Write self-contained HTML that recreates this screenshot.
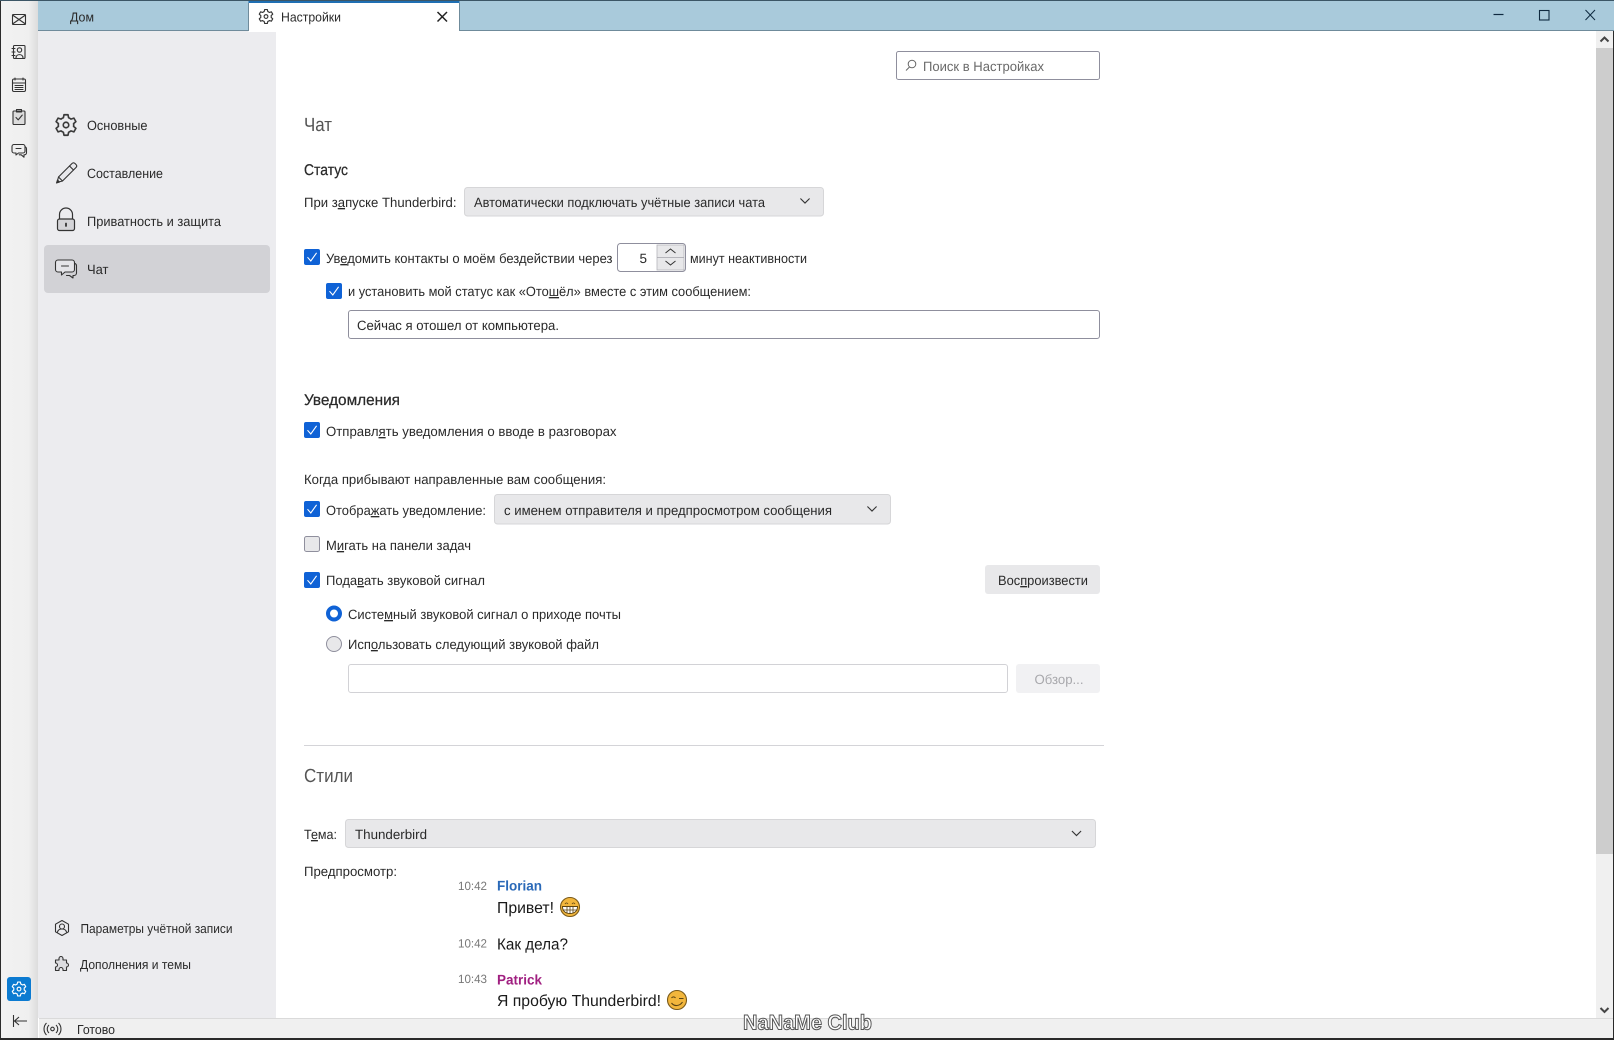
<!DOCTYPE html>
<html><head><meta charset="utf-8"><style>
html,body{margin:0;padding:0;background:#fff;width:1614px;height:1040px;overflow:hidden}
svg{display:block}
text{font-family:"Liberation Sans","Noto Sans CJK JP",sans-serif;fill:#2a2a2a;font-size:13.5px;text-rendering:geometricPrecision}
.h{font-size:15.5px;stroke:#2a2a2a;stroke-width:.25px}
.t{font-size:19px;fill:#555}
.u{text-decoration:underline}
.i{fill:none;stroke:#333;stroke-width:1.1;stroke-linejoin:round;stroke-linecap:round}
</style></head><body>
<svg width="1614" height="1040" viewBox="0 0 1614 1040" xmlns="http://www.w3.org/2000/svg">
<defs>
<linearGradient id="s" x1="0" x2="1" y1="0" y2="0"><stop offset="0" stop-color="#f2f2f2"/><stop offset=".75" stop-color="#efefef"/><stop offset="1" stop-color="#dcdcdc"/></linearGradient>
<symbol id="gear" viewBox="0 0 16 16" overflow="visible"><path d="M6.08 2.74L6.55 .54H9.45L9.92 2.74A5.6 5.6 0 0 1 11.6 3.71L13.74 3.01L15.19 5.53L13.51 7.03A5.6 5.6 0 0 1 13.51 8.97L15.19 10.47L13.74 12.99L11.6 12.29A5.6 5.6 0 0 1 9.92 13.26L9.45 15.46H6.55L6.08 13.26A5.6 5.6 0 0 1 4.4 12.29L2.26 12.99L.81 10.47L2.49 8.97A5.6 5.6 0 0 1 2.49 7.03L.81 5.53L2.26 3.01L4.4 3.71A5.6 5.6 0 0 1 6.08 2.74Z" fill="none" stroke="currentColor" stroke-width="1.2" stroke-linejoin="round"/><circle cx="8" cy="8" r="2" fill="none" stroke="currentColor" stroke-width="1.2"/></symbol>
<symbol id="chev" viewBox="0 0 12 8" overflow="visible"><path d="M1 1.5L6 6.5L11 1.5" fill="none" stroke="#333" stroke-width="1.2"/></symbol>
<symbol id="chk" viewBox="0 0 16 16"><rect width="16" height="16" rx="2" fill="#0f62d6"/><path d="M3.5 8.2L6.8 12L12.6 3.8" fill="none" stroke="#fff" stroke-width="1.1"/></symbol>
</defs>

<!-- chrome -->
<rect width="1614" height="1040" fill="#fff"/>
<rect x="38" y="31" width="238" height="987" fill="#ececef"/>
<rect x="0" y="0" width="38" height="1040" fill="url(#s)"/>
<rect x="0" y="0" width="1" height="1040" fill="#2c2c2c"/>
<rect x="38" y="0" width="1576" height="31" fill="#a9cadb"/>
<rect x="0" y="0" width="1614" height="1" fill="#3c5666"/>
<rect x="38" y="30" width="1576" height="1" fill="#6f8b9b"/>
<rect x="248.500" y="1" width="211" height="31" fill="#fff"/>
<rect x="248.500" y="1" width="211" height="2" fill="#1f6fb3"/>
<rect x="248" y="3" width="1" height="28" fill="#6f8b9b"/>
<rect x="459" y="3" width="1" height="28" fill="#6f8b9b"/>

<text x="70" y="21.500" textLength="24" lengthAdjust="spacingAndGlyphs" style="font-size:13px">Дом</text>
<use href="#gear" x="258.500" y="9" width="15" height="15" color="#333"/>
<text x="281" y="21.500" textLength="60" lengthAdjust="spacingAndGlyphs" style="font-size:13px">Настройки</text>
<path d="M437.500 12L447 21.500M447 12L437.500 21.500" stroke="#222" stroke-width="1.5" fill="none"/>

<!-- window controls -->
<path d="M1493.500 14.500H1503.500" stroke="#0f2a40" stroke-width="1.2"/>
<rect x="1539.500" y="10.500" width="9.500" height="9.500" fill="none" stroke="#0f2a40" stroke-width="1.1"/>
<path d="M1585.500 10L1595 20M1595 10L1585.500 20" stroke="#0f2a40" stroke-width="1"/>

<!-- left strip icons -->
<g class="i" stroke-width="1.1">
<rect x="12.500" y="14.500" width="13" height="10" rx="1"/><path d="M12.500 15L25.500 24M25.500 15L12.500 24"/>
<rect x="13.500" y="45.500" width="11.500" height="13" rx="1"/><path d="M12 48.500h3M12 52h3M12 55.500h3"/><circle cx="19.500" cy="50" r="2.200"/><path d="M16 58c0-4.500 7-4.500 7 0"/>
<rect x="12.500" y="79" width="13" height="12.500" rx="1.500"/><path d="M12.500 83h13M15 78v2M23 78v2M15 85.500h8M15 87.500h8M15 89.500h8"/>
<rect x="13" y="111" width="12" height="13.500" rx="1" fill="#dcdcdc"/><path d="M16.500 109.500h5v2.500h-5zM16 117.500l2.200 2.400 4-4.800"/>
<path d="M14 144.500h9a2 2 0 0 1 2 2v4.500a2 2 0 0 1-2 2h-4.500l-2.500 2v-2H14a2 2 0 0 1-2-2v-4.500a2 2 0 0 1 2-2z"/><path d="M16 148.500h5M25.500 147a2 2 0 0 1 1 1.800v4a2 2 0 0 1-2 2H24v2.400l-2.800-2.400h-2"/>
</g>

<!-- side nav -->
<rect x="44" y="245" width="226" height="48" rx="4" fill="#d2d2d6"/>
<use href="#gear" x="55" y="114" width="22" height="22" color="#3a3a3a"/>
<text x="87" y="130" textLength="60.500" lengthAdjust="spacingAndGlyphs">Основные</text>
<g class="i" stroke-width="1.3">
<path d="M57 182.500l1.500-5.500 13.500-13.500c1-1 2-1 3 0l1 1c1 1 1 2 0 3L62.500 181z" fill="#e8e8ec"/><path d="M58.500 177l4 4M69.500 166l4 4"/><path d="M56.500 183l3-1-2-2z" fill="#333"/>
<path d="M59.500 219v-4.500a6.500 6.500 0 0 1 13 0V219" stroke-width="1.200"/><rect x="57.500" y="219" width="17" height="11.500" rx="2" fill="#d4d4d8" stroke-width="1.200"/><path d="M66 223.500v2.500" stroke-width="1.800"/>
<path d="M58 260h14a2.500 2.500 0 0 1 2.500 2.500v7a2.500 2.500 0 0 1-2.500 2.500h-7l-3.500 3v-3H58a2.500 2.500 0 0 1-2.500-2.500v-7A2.500 2.500 0 0 1 58 260z" fill="#e4e4e8"/><path d="M61.500 266h7M75 263.500a2.500 2.500 0 0 1 1.500 2.500v7a2.500 2.500 0 0 1-2.500 2.500h-1v2.500l-3.500-2.500h-3"/>
</g>
<text x="87" y="178" textLength="76" lengthAdjust="spacingAndGlyphs">Составление</text>
<text x="87" y="226" textLength="134" lengthAdjust="spacingAndGlyphs">Приватность и защита</text>
<text x="87" y="274" textLength="21.500" lengthAdjust="spacingAndGlyphs">Чат</text>

<g class="i" stroke-width="1.1">
<path d="M62 920.500l6.500 3.700v7.600L62 935.500l-6.500-3.700v-7.600z"/><circle cx="62" cy="926.500" r="2.500"/><path d="M57.500 932c1-4 8-4 9 0"/>
<path d="M55.500 962h3.500v-1.500a2 2 0 0 1 4 0V962h3.500v3a2 2 0 0 1 0 4v3.500h-3.500v-1a2 2 0 0 0-4 0v1h-3.500v-3.500a2 2 0 0 0 0-4z" transform="translate(0 -2)" fill="#dcdce0"/>
</g>
<text x="80.500" y="933" textLength="152" lengthAdjust="spacingAndGlyphs" style="font-size:13px">Параметры учётной записи</text>
<text x="80" y="969" textLength="111" lengthAdjust="spacingAndGlyphs" style="font-size:13px">Дополнения и темы</text>

<rect x="7" y="977" width="24" height="24" rx="3" fill="#0c7bd1"/>
<use href="#gear" x="11.500" y="981.500" width="15" height="15" color="#fff"/>
<path d="M13.500 1015v12M27 1021H15M19 1017l-4.500 4 4.500 4" fill="none" stroke="#333" stroke-width="1.1"/>

<!-- status bar -->
<rect x="39" y="1018" width="1575" height="20" fill="#f0f0f0"/>
<rect x="39" y="1018" width="1575" height="1" fill="#dadada"/>
<rect x="0" y="1038" width="1614" height="2" fill="#2a2a2a"/>
<g fill="none" stroke="#333" stroke-width="1.100"><circle cx="52.500" cy="1029" r="1.800"/><path d="M49 1025a5.500 5.500 0 0 0 0 8M56 1025a5.500 5.500 0 0 1 0 8M46.500 1023a8.500 8.500 0 0 0 0 12M58.500 1023a8.500 8.500 0 0 1 0 12"/></g>
<text x="77" y="1034" textLength="38" lengthAdjust="spacingAndGlyphs" style="font-size:13px">Готово</text>

<!-- scrollbar -->
<rect x="1596" y="31" width="17" height="987" fill="#f0f0f0"/>
<rect x="1596" y="48" width="17" height="806" fill="#cdcdcd"/>
<path d="M1600.500 41.500L1604.500 37.500L1608.500 41.500" fill="none" stroke="#444" stroke-width="2"/>
<path d="M1600.500 1008L1604.500 1012L1608.500 1008" fill="none" stroke="#444" stroke-width="2"/>
<rect x="1613" y="31" width="1" height="1009" fill="#2a2a2a"/>

<!-- search -->
<rect x="896.500" y="51.500" width="203" height="28" rx="2" fill="#fff" stroke="#8f8f9d"/>
<circle cx="912" cy="64" r="3.800" fill="none" stroke="#666" stroke-width="1"/><path d="M909.500 67L906 70.500" stroke="#666" stroke-width="1"/>
<text x="923" y="71" textLength="121" lengthAdjust="spacingAndGlyphs" style="fill:#6a6a6a">Поиск в Настройках</text>

<!-- Chat -->
<text class="t" x="304" y="131" textLength="28" lengthAdjust="spacingAndGlyphs">Чат</text>
<text class="h" x="304" y="175" textLength="44" lengthAdjust="spacingAndGlyphs">Статус</text>
<text x="304" y="207" textLength="152.500" lengthAdjust="spacingAndGlyphs">При з<tspan class="u">а</tspan>пуске Thunderbird:</text>
<rect x="464.500" y="187.500" width="359" height="28.500" rx="3" fill="#e8e8ea" stroke="#d6d6d8"/>
<text x="474" y="207" textLength="291" lengthAdjust="spacingAndGlyphs">Автоматически подключать учётные записи чата</text>
<use href="#chev" x="799.500" y="197" width="11" height="7.500"/>

<use href="#chk" x="304" y="249" width="16" height="16"/>
<text x="326" y="263" textLength="286.500" lengthAdjust="spacingAndGlyphs">Ув<tspan class="u">е</tspan>домить контакты о моём бездействии через</text>
<rect x="617.500" y="243.500" width="68" height="28" rx="3" fill="#fff" stroke="#8f8f9d"/>
<rect x="657" y="245" width="27" height="25" fill="#e8e8ea" stroke="#b5b5bb" stroke-width=".8"/>
<path d="M657 257.500H684" stroke="#a5a5ab" stroke-width=".8"/>
<path d="M665.500 253L670.500 249L675.500 253M665.500 261L670.500 265L675.500 261" fill="none" stroke="#333" stroke-width="1"/>
<text x="639.500" y="263" textLength="7.500" lengthAdjust="spacingAndGlyphs">5</text>
<text x="690" y="263" textLength="117" lengthAdjust="spacingAndGlyphs">минут неактивности</text>

<use href="#chk" x="326" y="283" width="16" height="16"/>
<text x="348" y="296" textLength="403" lengthAdjust="spacingAndGlyphs">и установить мой статус как «Ото<tspan class="u">ш</tspan>ёл» вместе с этим сообщением:</text>
<rect x="348.500" y="310.500" width="751" height="28" rx="2.500" fill="#fff" stroke="#8f8f9d"/>
<text x="357" y="330" textLength="202" lengthAdjust="spacingAndGlyphs">Сейчас я отошел от компьютера.</text>

<text class="h" x="304" y="405" textLength="96" lengthAdjust="spacingAndGlyphs">Уведомления</text>
<use href="#chk" x="304" y="422" width="16" height="16"/>
<text x="326" y="436" textLength="290.500" lengthAdjust="spacingAndGlyphs">Отправл<tspan class="u">я</tspan>ть уведомления о вводе в разговорах</text>
<text x="304" y="484" textLength="302" lengthAdjust="spacingAndGlyphs">Когда прибывают направленные вам сообщения:</text>

<use href="#chk" x="304" y="501" width="16" height="16"/>
<text x="326" y="515" textLength="160" lengthAdjust="spacingAndGlyphs">Отобра<tspan class="u">ж</tspan>ать уведомление:</text>
<rect x="494.500" y="494.500" width="396" height="29.500" rx="3" fill="#e8e8ea" stroke="#d6d6d8"/>
<text x="504" y="515" textLength="328" lengthAdjust="spacingAndGlyphs">с именем отправителя и предпросмотром сообщения</text>
<use href="#chev" x="866.500" y="505" width="11" height="7.500"/>

<rect x="304.500" y="536.500" width="15" height="15" rx="2" fill="#e8e8ea" stroke="#8f8f9d"/>
<text x="326" y="550" textLength="145" lengthAdjust="spacingAndGlyphs">М<tspan class="u">и</tspan>гать на панели задач</text>

<use href="#chk" x="304" y="572" width="16" height="16"/>
<text x="326" y="585" textLength="159" lengthAdjust="spacingAndGlyphs">Пода<tspan class="u">в</tspan>ать звуковой сигнал</text>
<rect x="985" y="565" width="115" height="29" rx="3" fill="#e8e8ea"/>
<text x="998" y="585" textLength="90" lengthAdjust="spacingAndGlyphs">Вос<tspan class="u">п</tspan>роизвести</text>

<circle cx="334" cy="613.500" r="6" fill="#fff" stroke="#0f62d6" stroke-width="4"/>
<text x="348" y="619" textLength="273" lengthAdjust="spacingAndGlyphs">Систе<tspan class="u">м</tspan>ный звуковой сигнал о приходе почты</text>
<circle cx="334" cy="644" r="7.500" fill="#e8e8ea" stroke="#8f8f9d"/>
<text x="348" y="649" textLength="251" lengthAdjust="spacingAndGlyphs">Исп<tspan class="u">о</tspan>льзовать следующий звуковой файл</text>
<rect x="348.500" y="664.500" width="659" height="28" rx="2.500" fill="#fff" stroke="#d2d2d6"/>
<rect x="1016" y="664" width="84" height="29" rx="3" fill="#f1f1f3"/>
<text x="1034.500" y="684" textLength="49" lengthAdjust="spacingAndGlyphs" style="fill:#a8a8ac">Обзор...</text>

<rect x="304" y="745" width="800" height="1" fill="#d4d4d8"/>

<text class="t" x="304" y="782" textLength="49" lengthAdjust="spacingAndGlyphs">Стили</text>
<text x="304" y="839" textLength="33" lengthAdjust="spacingAndGlyphs">Т<tspan class="u">е</tspan>ма:</text>
<rect x="345.500" y="819.500" width="750" height="28" rx="3" fill="#e8e8ea" stroke="#d6d6d8"/>
<text x="355" y="839" textLength="72" lengthAdjust="spacingAndGlyphs">Thunderbird</text>
<use href="#chev" x="1071" y="829.500" width="11" height="7.500"/>

<text x="304" y="876" textLength="93" lengthAdjust="spacingAndGlyphs">Предпросмотр:</text>
<text x="458" y="890" textLength="29" lengthAdjust="spacingAndGlyphs" style="font-size:12px;fill:#777">10:42</text>
<text x="497" y="890.500" textLength="45" lengthAdjust="spacingAndGlyphs" style="font-size:14px;font-weight:bold;fill:#2a69b8">Florian</text>
<text x="497" y="913" textLength="57" lengthAdjust="spacingAndGlyphs" style="font-size:16px;fill:#1a1a1a">Привет!</text>
<circle cx="570" cy="907" r="9.500" fill="#f2b63c" stroke="#7a5a1a" stroke-width="1.100"/>
<path d="M562.500 906.500h15c0 4.500-3 7-7.500 7s-7.500-2.500-7.500-7z" fill="#fff" stroke="#5a4212" stroke-width=".9"/>
<path d="M565 904c1-1.500 2-1.500 3 0M572 904c1-1.500 2-1.500 3 0M562.500 910h15M567 906.500v6.500M570 906.500v7M573 906.500v6.500" fill="none" stroke="#5a4212" stroke-width=".8"/>

<text x="458" y="947.500" textLength="29" lengthAdjust="spacingAndGlyphs" style="font-size:12px;fill:#777">10:42</text>
<text x="497" y="949.500" textLength="71" lengthAdjust="spacingAndGlyphs" style="font-size:16px;fill:#1a1a1a">Как дела?</text>

<text x="458" y="983" textLength="29" lengthAdjust="spacingAndGlyphs" style="font-size:12px;fill:#777">10:43</text>
<text x="497" y="984.500" textLength="45" lengthAdjust="spacingAndGlyphs" style="font-size:14px;font-weight:bold;fill:#a01f80">Patrick</text>
<text x="497" y="1006" textLength="164" lengthAdjust="spacingAndGlyphs" style="font-size:16px;fill:#1a1a1a">Я пробую Thunderbird!</text>
<circle cx="677" cy="1000" r="9.500" fill="#f2b63c" stroke="#7a5a1a" stroke-width="1.100"/>
<path d="M671.500 998c1-1.500 3-1.500 4 0M679 998.500h4.500M671.500 1003c2.500 3.500 8 3.500 11-1" fill="none" stroke="#5a4212" stroke-width="1.100"/>

<!-- watermark -->
<text x="743" y="1029.500" textLength="129" lengthAdjust="spacingAndGlyphs" style="font-size:21px;font-weight:bold;fill:#fff;stroke:#555;stroke-width:1px">NaNaMe Club</text>
</svg>
</body></html>
